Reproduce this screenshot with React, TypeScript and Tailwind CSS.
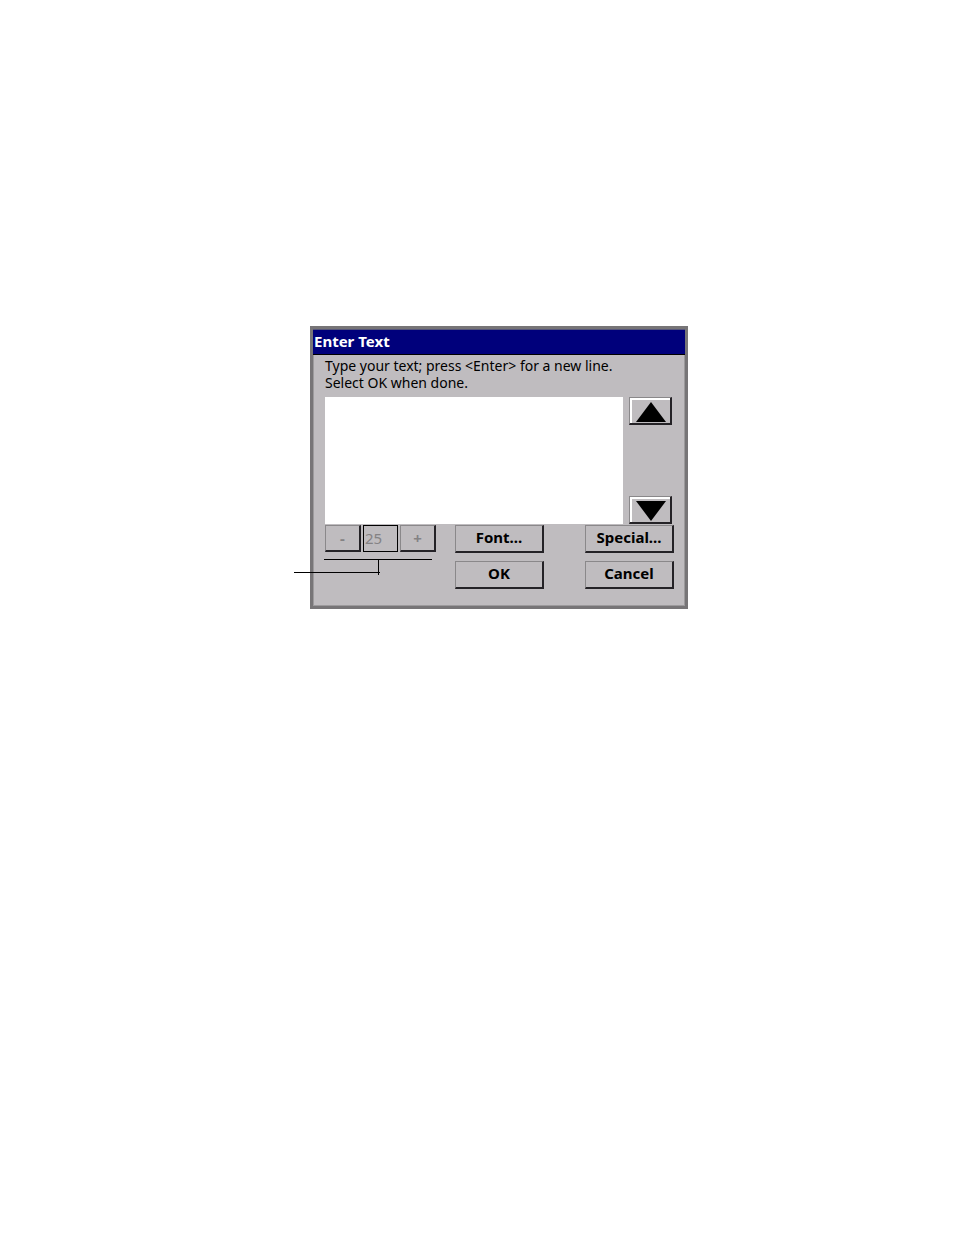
import { useState, type ReactNode } from 'react'

const bevel =
  'border border-t-[#8a888a] border-l-[#8a888a] border-r-2 border-b-2 border-r-[#242226] border-b-[#242226] bg-[#bfbcbf]'

function DialogButton({ children }: { children: ReactNode }) {
  return (
    <button
      type="button"
      className={`${bevel} flex h-7 w-[89px] items-center justify-center pb-[2px] text-[15px] font-bold leading-none text-black`}
    >
      {children}
    </button>
  )
}

function StepButton({ label, children }: { label: string; children: ReactNode }) {
  return (
    <button
      type="button"
      disabled
      aria-label={label}
      className={`${bevel} flex h-[27px] w-9 items-center justify-center text-[15px] font-bold leading-none text-[#848284]`}
    >
      {children}
    </button>
  )
}

function ScrollButton({ label, points }: { label: string; points: string }) {
  return (
    <button
      type="button"
      aria-label={label}
      className="h-7 w-[43px] border border-t-[#8a888a] border-l-[#8a888a] border-r-2 border-b-2 border-r-[#242226] border-b-[#242226]"
    >
      <span className="flex h-full items-center justify-center border-t-2 border-l-2 border-white bg-[#bfbcbf]">
        <svg width="30" height="20" viewBox="0 0 30 20" aria-hidden="true" className="shrink-0">
          <polygon points={points} fill="#000" />
        </svg>
      </span>
    </button>
  )
}

export default function App() {
  const [text, setText] = useState('')

  return (
    <main className="flex min-h-screen items-start justify-center bg-white pt-[326px] pl-11 font-['Noto_Sans',sans-serif]">
      <section
        role="dialog"
        aria-labelledby="dialog-title"
        className="relative w-[378px] border-3 border-[#777577] bg-[#bfbcbf]"
      >
        <h1
          id="dialog-title"
          className="h-[26px] border-t border-b border-t-[#55557a] border-b-black bg-[#00007b] pl-px text-[15px] leading-[22px] font-bold text-white"
        >
          Enter Text
        </h1>

        <div className="border-x border-b border-[#9c9a9c] pt-[2px] pr-[10px] pb-4 pl-[11px]">
          <label htmlFor="entry" className="block text-sm leading-[17px] text-black">
            Type your text; press &lt;Enter&gt; for a new line.
            <br />
            Select OK when done.
          </label>

          <div className="mt-[6px] flex gap-[6px] pr-[2px]">
            <textarea
              id="entry"
              value={text}
              onChange={(e) => setText(e.target.value)}
              className="h-[127px] min-w-0 flex-1 resize-none bg-white p-1 text-sm leading-[17px] outline-none"
            />
            <div className="flex flex-col justify-between">
              <ScrollButton label="Scroll up" points="15,0 30,20 0,20" />
              <ScrollButton label="Scroll down" points="0,0 30,0 15,20" />
            </div>
          </div>

          <div className="mt-px flex justify-between">
            <div className="flex gap-[19px]">
              <div className="flex gap-px">
                <StepButton label="Decrease size">-</StepButton>
                <input
                  type="text"
                  aria-label="Text size"
                  value="25"
                  disabled
                  readOnly
                  className="mx-px h-[27px] w-[35px] border border-black bg-[#bfbcbf] pb-[2px] pl-px text-[15px] text-[#848284]"
                />
                <StepButton label="Increase size">+</StepButton>
              </div>
              <DialogButton>Font...</DialogButton>
            </div>
            <DialogButton>Special...</DialogButton>
          </div>

          <div className="mt-2 flex justify-end gap-[41px]">
            <DialogButton>OK</DialogButton>
            <DialogButton>Cancel</DialogButton>
          </div>
        </div>

        {/* callout bracket under the size stepper */}
        <svg
          width="139"
          height="18"
          viewBox="0 0 139 18"
          aria-hidden="true"
          className="pointer-events-none absolute top-[230px] -left-[19px]"
          shapeRendering="crispEdges"
        >
          <path d="M30 0h108v1H30zM84 0h1v16h-1zM0 13h86v1H0z" fill="#000" />
        </svg>
      </section>
    </main>
  )
}
